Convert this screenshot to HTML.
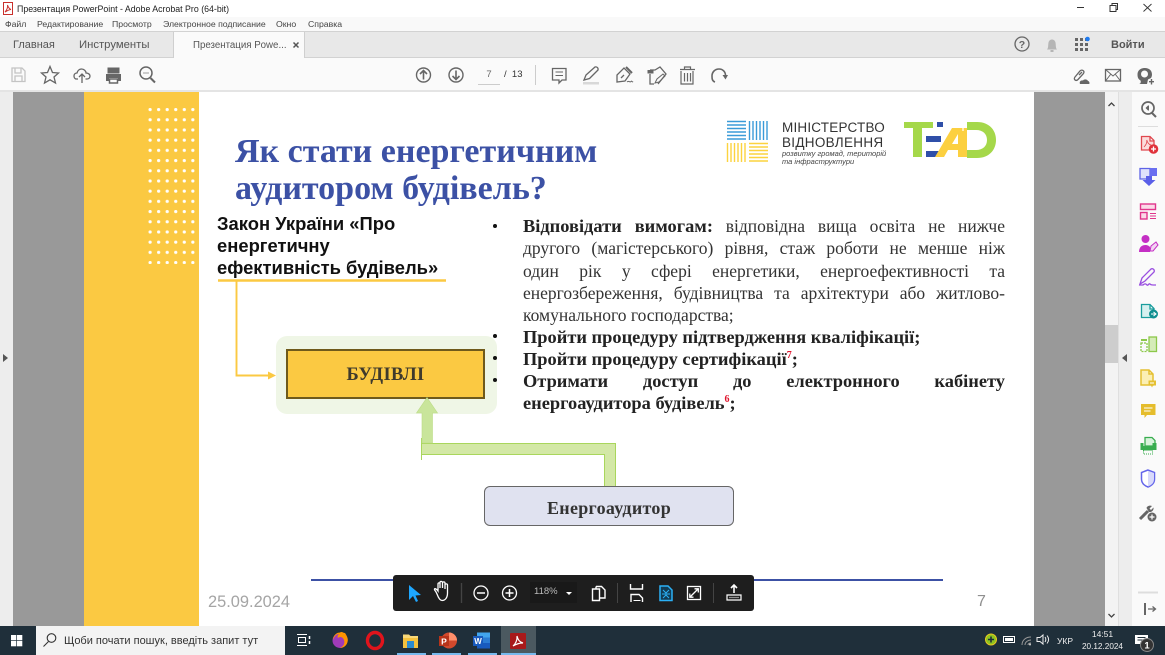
<!DOCTYPE html>
<html><head><meta charset="utf-8">
<style>
*{margin:0;padding:0;box-sizing:border-box}
html,body{width:1165px;height:655px;overflow:hidden;background:#fff}
body{position:relative;font-family:"Liberation Sans","DejaVu Sans",sans-serif}
.a{position:absolute;white-space:nowrap}
.m{top:19px;font-size:8.7px;line-height:11px;color:#444}
.j{position:absolute;left:523px;width:482px;font-family:"Liberation Serif",serif;font-size:17.5px;line-height:22px;height:22px;color:#333;text-align:justify;text-align-last:justify;white-space:nowrap}
.l{text-align-last:left}
.b{font-weight:bold;color:#222;font-size:18.4px}
.d{position:absolute;left:493px;width:4px;height:4px;border-radius:50%;background:#111}
sup{font-size:10px;color:#e0142c;line-height:0;font-weight:bold}
svg{position:absolute;overflow:visible}
</style></head><body>

<!-- title bar -->
<div class="a" style="left:0;top:0;width:1165px;height:17px;background:#fff"></div>
<svg style="left:1px;top:1px" width="14" height="15"><rect x="2.5" y="1.5" width="9" height="12" fill="#fff" stroke="#c9302c"/><path d="M4 11C6 9 7 6 6.500 4 7.500 7 8.500 8 10 8.500 8 8.500 6 10 4 11Z" fill="none" stroke="#c9302c"/></svg>
<div class="a" style="left:17px;top:3px;font-size:8.8px;line-height:12px;color:#222">Презентация PowerPoint - Adobe Acrobat Pro (64-bit)</div>
<svg style="left:1070px;top:0" width="95" height="17" fill="none" stroke="#333"><path d="M7 7.500H14"/><rect x="40" y="5.500" width="6" height="6"/><path d="M42 5.500V3.500H47.500V9.500H46"/><path d="M73.500 4L81.500 11.500M81.500 4L73.500 11.500" stroke-width=".9"/></svg>

<!-- menu -->
<div class="a" style="left:0;top:17px;width:1165px;height:15px;background:#f9f9f9"></div>
<div class="a m" style="left:5px">Файл</div>
<div class="a m" style="left:37px">Редактирование</div>
<div class="a m" style="left:112px">Просмотр</div>
<div class="a m" style="left:163px">Электронное подписание</div>
<div class="a m" style="left:276px">Окно</div>
<div class="a m" style="left:308px">Справка</div>

<!-- tab bar -->
<div class="a" style="left:0;top:31px;width:1165px;height:27px;background:#e8e8e8;border-top:1px solid #d2d2d2;border-bottom:1px solid #d2d2d2"></div>
<div class="a" style="left:173px;top:32px;width:132px;height:27px;background:#fafafa;border-left:1px solid #cfcfcf;border-right:1px solid #cfcfcf"></div>
<div class="a" style="left:13px;top:38px;font-size:11px;line-height:14px;color:#555">Главная</div>
<div class="a" style="left:79px;top:38px;font-size:11.3px;line-height:14px;color:#555">Инструменты</div>
<div class="a" style="left:193px;top:39px;font-size:9.7px;line-height:13px;color:#555">Презентация Powe...</div>
<svg style="left:292px;top:41px" width="10" height="10"><path d="M1.500 1.500L6.500 6.500M6.500 1.500L1.500 6.500" stroke="#555" stroke-width="1.500"/></svg>
<!-- right tab icons -->
<svg style="left:1012px;top:34px" width="90" height="22">
<circle cx="10" cy="10" r="7" fill="none" stroke="#666" stroke-width="1.300"/>
<text x="10" y="14" font-size="10.500" font-weight="bold" fill="#666" text-anchor="middle" font-family="Liberation Sans">?</text>
<path d="M35 15.500C36.500 14 36 11 36.500 8.500 37 6.500 38.500 5.500 40 5.500 41.500 5.500 43 6.500 43.500 8.500 44 11 43.500 14 45 15.500Z" fill="#b5b5b5"/><rect x="38.500" y="16" width="3" height="2" fill="#b5b5b5"/>
<g fill="#666"><rect x="63" y="4" width="3" height="3"/><rect x="68" y="4" width="3" height="3"/><rect x="73" y="4" width="3" height="3"/><rect x="63" y="9" width="3" height="3"/><rect x="68" y="9" width="3" height="3"/><rect x="73" y="9" width="3" height="3"/><rect x="63" y="14" width="3" height="3"/><rect x="68" y="14" width="3" height="3"/><rect x="73" y="14" width="3" height="3"/></g>
<circle cx="75.500" cy="5" r="2.300" fill="#1e7bf0"/>
</svg>
<div class="a" style="left:1111px;top:38px;font-size:11px;line-height:14px;font-weight:bold;color:#555">Войти</div>

<!-- toolbar -->
<div class="a" style="left:0;top:58px;width:1165px;height:34px;background:#fafafa;border-bottom:2px solid #e4e4e4"></div>
<svg style="left:0;top:58px" width="1165" height="34" fill="none" stroke="#666" stroke-width="1.300">
<path d="M12 10H22L25 13V23.500H12Z M15 10V15H21V10 M15 23.500V18H22V23.500" stroke="#c4c4c4"/>
<path d="M50 8.500L52.500 14.500 58.500 15 54 19 55.500 25 50 21.800 44.500 25 46 19 41.500 15 47.500 14.500Z"/>
<path d="M78 21H76.500C74.500 21 74 19 74 18 74 16 75.500 15 77 15 77.500 12.500 79.500 11 81.500 11 84 11 86 13 86 15 88.500 15 90 16.500 90 18 90 20 88.500 21 87 21H85.500"/><path d="M82 25V16M79 19L82 16 85 19"/>
<path d="M106 16H121V23H118V20H109V23H106Z" fill="#666" stroke="none"/><rect x="108" y="10" width="11" height="5" fill="#666" stroke="#666" stroke-width="1"/><rect x="109.500" y="21" width="8" height="4" fill="none" stroke="#666" stroke-width="1.500"/>
<circle cx="146" cy="15" r="6" stroke-width="1.500"/><path d="M150.500 20L155 24.500" stroke-width="2"/><path d="M143.500 15H148.500" stroke-dasharray="1 1"/>
<circle cx="423.500" cy="17" r="7" stroke-width="1.400"/><path d="M423.500 21.500V13M420 16L423.500 12.500 427 16" stroke-width="1.600"/>
<circle cx="456" cy="17" r="7" stroke-width="1.400"/><path d="M456 12.500V21M452.500 18L456 21.500 459.500 18" stroke-width="1.600"/>
<path d="M535.500 7V27" stroke="#ccc" stroke-width="1"/>
<path d="M552.500 10.500H566V22H562L559 25V22H552.500Z"/><path d="M555.500 14H563M555.500 17.500H563" stroke-width="1"/>
<path d="M584 22L586 17 595 9C597 8.500 598.500 10 598 12L589.500 20.500Z"/><rect x="583" y="24" width="16" height="2.500" fill="#d8d8d8" stroke="none"/>
<path d="M617 24L617 17 624 10 630 16 625 23ZM621 20L624 17"/><path d="M626 9L632 15" stroke-width="2"/><path d="M627 24C629 22 630 25 631 23.500S632 25 633 23.500" stroke-width="1"/>
<path d="M650 12H655L660 9L666 16L658 26M650 16V26H654"/><rect x="647.500" y="12" width="6" height="3.500" fill="#666" stroke="none"/><path d="M655 25L657 21 663 16 665 18 659 24Z" stroke-width="1"/>
<path d="M681 13V26H693V13M680 11.500H695M684.500 11V9H690.500V11M684.500 15V23.500M687.500 15V23.500M690.500 15V23.500" stroke-width="1.200"/>
<path d="M715 24C712 23 712 20.500 712 18 712 14 715 11 719 11 723 11 725.500 14 725.500 17.500" stroke-width="1.600"/><path d="M722.500 17L725.500 21.500 728 17Z" fill="#666" stroke="none"/>
<path d="M1075 19L1080 13C1082 11 1085 13 1083.500 15.500L1078 21.500C1076 23.500 1073 21.500 1075 19ZM1079 17L1082 14"/><path d="M1080 26C1079 23.500 1081 22 1083 22.500 1084 21 1087 21 1088 23 1089.500 23 1090 26 1089 26Z" fill="#666" stroke="none"/>
<rect x="1105.500" y="11.500" width="15" height="11.500"/><path d="M1105.500 11.500L1113 18 1120.500 11.500M1105.500 23L1110.500 16.500M1120.500 23L1115.500 16.500" stroke-width="1"/>
<path d="M1139 26C1141 26 1141 23 1140.500 22.500 1138 21 1137.500 19 1137.500 16.500 1137.500 12.500 1140.500 10 1145 10 1149 10 1152 12.500 1152 16.500 1152 18 1151.500 19 1151 20L1148 21.500 1147 26Z" fill="#666" stroke="none"/><circle cx="1144.500" cy="16" r="3.500" fill="#fafafa" stroke="none"/>
<path d="M1151.500 21V26.500M1149 23.700H1154" stroke-width="1.400"/>
</svg>
<div class="a" style="left:478px;top:69px;width:22px;text-align:center;font-size:9.500px;line-height:12px;color:#666;border-bottom:1px solid #ccc;height:16px">7</div>
<div class="a" style="left:504px;top:69px;font-size:9.500px;line-height:12px;color:#333">/ &nbsp;13</div>

<!-- document area -->
<div class="a" style="left:0;top:92px;width:13px;height:534px;background:#ededed"></div>
<svg style="left:3px;top:354px" width="6" height="8"><path d="M0 0L5 4 0 8Z" fill="#555"/></svg>
<div class="a" style="left:13px;top:92px;width:71px;height:534px;background:#999"></div>
<div class="a" style="left:1034px;top:92px;width:71px;height:534px;background:#999"></div>

<!-- scrollbars / panels -->
<div class="a" style="left:1105px;top:92px;width:13px;height:534px;background:#f3f3f3"></div>
<div class="a" style="left:1105px;top:325px;width:13px;height:38px;background:#cdcdcd"></div>
<svg style="left:1107px;top:101px" width="9" height="520" fill="none" stroke="#444" stroke-width="1.300"><path d="M1.500 5L4.500 2 7.500 5M1.500 513L4.500 516 7.500 513"/></svg>
<div class="a" style="left:1118px;top:92px;width:14px;height:534px;background:#ededed;border-left:1px solid #dfdfdf"></div>
<svg style="left:1122px;top:354px" width="6" height="8"><path d="M5 0L0 4 5 8Z" fill="#555"/></svg>
<div class="a" style="left:1132px;top:92px;width:33px;height:534px;background:#fafafa"></div>

<!-- right panel icons -->
<svg style="left:1132px;top:92px" width="33" height="534" fill="none">
<circle cx="16" cy="16" r="6" stroke="#666" stroke-width="1.700"/><path d="M20 21L24 25" stroke="#666" stroke-width="2"/><path d="M13.500 16L16 13.500V18.500Z" fill="#666"/><path d="M16.500 13.500V18.500" stroke="#666"/>
<path d="M6 34.500H26" stroke="#ddd"/>
<!-- create pdf red -->
<path d="M9.500 44.500H18L22 48.500V58H9.500ZM18 44.500V49H22" fill="#fbdcdc" stroke="#e0484f" stroke-width="1.300"/><path d="M12 55C14 53 15 50 14.800 48 15.500 51 17 52.500 19 53" stroke="#e0484f" stroke-width=".8"/><circle cx="21.500" cy="57" r="4.800" fill="#e0313a"/><path d="M19 57H24M21.500 54.500V59.500" stroke="#fff" stroke-width="1.300"/>
<!-- combine blue -->
<path d="M8 76.500H18V87H8Z" fill="#dfe1fb" stroke="#5e63e6" stroke-width="1.300"/><path d="M18 76H25V84H18Z" fill="#6a6ff0"/><path d="M14 84H20V88H23.500L17 94 10.500 88H14Z" fill="#5a5fe8"/>
<!-- organise pink -->
<rect x="8.500" y="112" width="15" height="5.500" fill="#fbd9e8" stroke="#e0368c" stroke-width="1.400"/><rect x="8.500" y="120.500" width="6.500" height="6.500" fill="#fbd9e8" stroke="#e0368c" stroke-width="1.400"/><path d="M18 121.500H24M18 124H24M18 126.500H24" stroke="#e0368c"/>
<!-- person sign magenta -->
<circle cx="13.500" cy="147" r="4" fill="#c42fc4"/><path d="M7 160C7 155 10 153 13.500 153 15.500 153 17 154 18 155V160Z" fill="#c42fc4"/><path d="M18 159L19 154 24 150 26 153 21 159Z" fill="#f3d4f3" stroke="#c42fc4"/>
<!-- sign purple -->
<path d="M8 192L10 186 19 177C21 176 23 178 22 180L13 189ZM7 193H11C13 191 14 192 15 193S17 191 18 192 20 193 24 193" stroke="#9a4fe0" stroke-width="1.300"/>
<!-- send teal -->
<path d="M9.500 212.500H18L22 216.500V225.500H9.500ZM18 212.500V217H22" fill="#d6f0ef" stroke="#1a9d9d" stroke-width="1.300"/><circle cx="21.500" cy="222" r="4.500" fill="#0f8f90"/><path d="M19 222H23.500M21.500 220L24 222 21.500 224" stroke="#fff" stroke-width="1"/>
<!-- compress green -->
<rect x="17" y="245" width="7.500" height="14.500" fill="#d5ecb8" stroke="#8cc84a" stroke-width="1.300"/><rect x="9" y="251" width="6" height="8.500" stroke="#8cc84a" stroke-width="1.300" stroke-dasharray="2 1"/><path d="M9 248H15" stroke="#8cc84a" stroke-width="2"/>
<!-- yellow doc -->
<path d="M9 278H17L21 282V293H9ZM17 278V282H21" fill="#fbefb4" stroke="#e5c032" stroke-width="1.500"/><path d="M16.500 288.500H24V293.500H21L20 295.500 19 293.500H16.500Z" fill="#e5c032"/><path d="M18 291H22" stroke="#fff"/>
<!-- comment yellow -->
<path d="M9 312H23.500V323H15L12.500 326V323H9Z" fill="#e5bd2c"/><path d="M12 316H20.500M12 319H18.500" stroke="#fff"/>
<!-- print green -->
<path d="M13 345.500H20L23 348.500V354H13Z" fill="#d9f3dc" stroke="#38ad4f" stroke-width="1.300"/><path d="M8.500 351H11.500V354H20.500V351H24.500V358H8.500Z" fill="#38ad4f"/><rect x="11.500" y="358.500" width="9" height="3.500" stroke="#38ad4f" stroke-dasharray="1 1"/>
<!-- shield -->
<path d="M16 378L9.500 380.500V387C9.500 391 12 393.500 16 395 20 393.500 22.500 391 22.500 387V380.500Z" fill="#fff" stroke="#6465ea" stroke-width="1.500"/><path d="M16 379V394.500C19.500 393 22 391 22 387V381Z" fill="#d8d9fb"/>
<!-- tools -->
<path d="M8 427L16 419" stroke="#666" stroke-width="3"/><path d="M14.500 416C15 414 18 413 20 414L17.500 416.500 19 418 21.500 415.500C22 418 20 420.500 17 420Z" fill="#666"/><circle cx="20" cy="425" r="4.500" fill="#666"/><path d="M17.500 425H22.500M20 422.500V427.500" stroke="#fff" stroke-width="1.200"/>
<path d="M6 500.500H26" stroke="#ddd" stroke-width="2"/>
<!-- collapse -->
<path d="M13 511V523" stroke="#666" stroke-width="2"/><path d="M16 517H23M20.500 514.500L23.500 517 20.500 519.500" stroke="#666" stroke-width="1.300"/>
</svg>

<!-- SLIDE -->
<div class="a" style="left:84px;top:92px;width:950px;height:534px;background:#fff"></div>
<div class="a" style="left:84px;top:92px;width:115px;height:534px;background:#fbc942"></div>
<svg style="left:0;top:0" width="200" height="270" fill="#fff">
<defs><pattern id="dots" x="148.500" y="108" width="8.550" height="10.200" patternUnits="userSpaceOnUse"><circle cx="1.600" cy="1.600" r="1.600"/></pattern></defs>
<rect x="148" y="108" width="51.500" height="156" fill="url(#dots)"/>
</svg>

<!-- title -->
<div class="a" style="left:235px;top:133px;font-family:'Liberation Serif',serif;font-weight:bold;font-size:34px;line-height:38px;color:#3c51a5">Як стати енергетичним</div>
<div class="a" style="left:235px;top:170px;font-family:'Liberation Serif',serif;font-weight:bold;font-size:34px;line-height:38px;color:#3c51a5">аудитором будівель?</div>

<!-- logos -->
<svg style="left:726px;top:120px" width="44" height="44">
<g stroke="#3a9bd8" stroke-width="1.400"><path d="M1 1.500H20M1 5H20M1 8.500H20M1 12H20M1 15.500H20M1 19H20"/><path d="M23.500 1V20M27 1V20M30.500 1V20M34 1V20M37.500 1V20M41 1V20"/></g>
<g stroke="#fcd33f" stroke-width="1.400"><path d="M1.500 23V42M5 23V42M8.500 23V42M12 23V42M15.500 23V42M19 23V42"/><path d="M23 23.500H42M23 27H42M23 30.500H42M23 34H42M23 37.500H42M23 41H42"/></g>
</svg>
<div class="a" style="left:782px;top:121px;font-size:13.5px;line-height:14px;color:#333;letter-spacing:.2px">МІНІСТЕРСТВО</div>
<div class="a" style="left:782px;top:136px;font-size:13.5px;line-height:14px;color:#333;letter-spacing:.3px">ВІДНОВЛЕННЯ</div>
<div class="a" style="left:782px;top:150px;font-size:7.5px;line-height:8px;color:#444;font-style:italic">розвитку громад, територій</div>
<div class="a" style="left:782px;top:158px;font-size:7.5px;line-height:8px;color:#444;font-style:italic">та інфраструктури</div>
<svg style="left:903px;top:120px" width="95" height="40">
<path d="M1 2H30V8H19V37H10V8H1Z" fill="#a5d84a"/>
<rect x="34" y="2" width="6" height="5" fill="#2f4fa8"/>
<rect x="23" y="16" width="15" height="6" fill="#2f4fa8"/>
<rect x="23" y="31" width="15" height="6" fill="#2f4fa8"/>
<path d="M32 37L49 8H64V37H55V30H45L41 37Z" fill="#fcd040"/>
<path d="M49 24H55V14Z" fill="#fff"/>
<path d="M64 2H74C86 2 93 10 93 20 93 30 86 38 74 38H64V30H73C80 30 84 26 84 20 84 14 80 10 73 10H64Z" fill="#a5d84a"/>
<path d="M60 3V11M56 7H64" stroke="#fff" stroke-width="1.200"/>
</svg>

<!-- law -->
<div class="a" style="left:217px;top:213px;font-weight:bold;font-size:18.4px;line-height:22px;color:#111">Закон України «Про</div>
<div class="a" style="left:217px;top:235px;font-weight:bold;font-size:18.4px;line-height:22px;color:#111">енергетичну</div>
<div class="a" style="left:217px;top:257px;font-weight:bold;font-size:18.4px;line-height:22px;color:#111">ефективність будівель»</div>

<!-- diagram -->
<div class="a" style="left:276px;top:336px;width:221px;height:78px;border-radius:11px;background:#eff6e6"></div>
<svg style="left:0;top:0" width="1165" height="655">
<path d="M218 280.500H446" stroke="#fbc942" stroke-width="2.500"/>
<path d="M236.500 281V375.500H270" fill="none" stroke="#fbc942" stroke-width="1.900"/>
<path d="M268 371.500L276 375.500 268 379.500Z" fill="#fbc942"/>
<path d="M421.500 443H615.500V487H604.500V454.500H421.500Z" fill="#d3e8a6"/>
<path d="M421.500 438V460M421.500 454.500H604.500V487M615.500 487V443.500H421.500" fill="none" stroke="#a9d65c" stroke-width="1"/>
</svg>
<div class="a" style="left:286px;top:349px;width:199px;height:50px;background:#fbc942;border:2px solid #6f5a1b;text-align:center;font-family:'Liberation Serif',serif;font-weight:bold;font-size:18.5px;line-height:48px;color:#3f3a2c;letter-spacing:.3px">БУДІВЛІ</div>
<svg style="left:0;top:0" width="1165" height="655">
<path d="M427 397.500L437.500 413H432.500V443H422V413H416.500Z" fill="#c9e59b" stroke="#bcdc86" stroke-width=".6"/>
</svg>
<div class="a" style="left:484px;top:486px;width:250px;height:40px;background:#e0e2f0;border:1.500px solid #666;border-radius:6px;text-align:center;font-family:'Liberation Serif',serif;font-weight:bold;font-size:18px;line-height:42px;color:#333;letter-spacing:.3px">Енергоаудитор</div>

<!-- bullets -->
<div class="d" style="top:224px"></div>
<div class="d" style="top:334px"></div>
<div class="d" style="top:356px"></div>
<div class="d" style="top:378px"></div>
<div class="j" style="top:215px"><b class="b">Відповідати вимогам:</b> відповідна вища освіта не нижче</div>
<div class="j" style="top:237px">другого (магістерського) рівня, стаж роботи не менше ніж</div>
<div class="j" style="top:260px">один рік у сфері енергетики, енергоефективності та</div>
<div class="j" style="top:282px">енергозбереження, будівництва та архітектури або житлово-</div>
<div class="j l" style="top:304px">комунального господарства;</div>
<div class="j l b" style="top:326px">Пройти процедуру підтвердження кваліфікації;</div>
<div class="j l b" style="top:348px">Пройти процедуру сертифікації<sup>7</sup>;</div>
<div class="j b" style="top:370px">Отримати доступ до електронного кабінету</div>
<div class="j l b" style="top:392px">енергоаудитора будівель<sup>6</sup>;</div>

<!-- footer of slide -->
<div class="a" style="left:311px;top:579px;width:632px;height:2px;background:#3c51a5"></div>
<div class="a" style="left:208px;top:593px;font-size:16.4px;line-height:18px;color:#a5a5a5">25.09.2024</div>
<div class="a" style="left:977px;top:593px;font-size:16px;line-height:18px;color:#8f8f8f">7</div>

<!-- float toolbar -->
<div class="a" style="left:393px;top:575px;width:361px;height:36px;background:#1e1e1e;border-radius:3px"></div>
<div class="a" style="left:530px;top:582px;width:47px;height:21px;background:#191919"></div>
<div class="a" style="left:534px;top:586px;font-size:9.5px;line-height:12px;color:#bbb">118%</div>
<svg style="left:390px;top:570px" width="370" height="45" fill="none" stroke="#fff" stroke-width="1.300">
<path d="M19 15L19 30 23 26 26 32 28 31 25.500 25.500 31 25Z" fill="#1ea7ff" stroke="none"/>
<path d="M47 24C46 21 44 20 44.500 19 45 18 47 19.500 48 21V14C48 12.500 50 12.500 50 14V18 12.500C50 11 52 11 52.500 12.500V18 13C52.500 11.500 55 11.500 55 13V19 15C55 13.500 57.500 13.500 57.500 15V23C57.500 28 55 30.500 52 30.500 50 30.500 48.500 28 47 24Z"/>
<path d="M71.500 13V33" stroke="#444"/>
<circle cx="91" cy="23" r="7"/><path d="M87 23H95" stroke-width="1.500"/>
<circle cx="119.500" cy="23" r="7"/><path d="M115.500 23H123.500M119.500 19V27" stroke-width="1.500"/>
<path d="M176 22H182L179 25Z" fill="#fff" stroke="none"/>
<!-- pages -->
<path d="M206 16.500H211.500L215 20V28H210" stroke-width="1.400"/><path d="M206 16.500V19" stroke-width="1.400"/><path d="M202.500 19H209.500V30.500H202.500Z" stroke-width="1.400"/>
<path d="M227.500 13V33" stroke="#444" stroke-width="1"/>
<!-- fit width -->
<path d="M240.500 14V19H252.500V14M241 32V24.500H249L252.500 28V32" stroke-width="1.400"/><path d="M243.500 30.500H250.500" stroke-width="1"/>
<!-- blue -->
<path d="M270 16H278L282 20V30.500H270Z" stroke="#2bb0f5" fill="#123c55" stroke-width="1.500"/><path d="M273 20L276 23 279 20M273 28L276 25 279 28M272 24H280" stroke="#2bb0f5" stroke-width="1"/>
<!-- fullscreen -->
<rect x="297.500" y="16.500" width="13" height="13" stroke-width="1.300"/><path d="M300 27L308 19M304.500 18.800H308.300V22.500M299.800 23.500V27.200H303.500" stroke-width="1.300"/>
<path d="M323.500 13V33" stroke="#444" stroke-width="1"/>
<path d="M344 23V15.500M341 18L344 15 347 18" stroke-width="1.600"/><path d="M337 25H351V30H337Z" stroke-width="1.200"/><path d="M339.500 27.500H349" stroke-dasharray="1 1" stroke-width="1.200"/>
</svg>

<!-- taskbar -->
<div class="a" style="left:0;top:626px;width:1165px;height:29px;background:#1f2f3a"></div>
<svg style="left:11px;top:635px" width="12" height="12" fill="#fff"><rect width="5.300" height="5.300" x="0" y="0"/><rect width="5.300" height="5.300" x="6" y="0"/><rect width="5.300" height="5.300" x="0" y="6"/><rect width="5.300" height="5.300" x="6" y="6"/></svg>
<div class="a" style="left:36px;top:626px;width:249px;height:29px;background:#f3f3f3"></div>
<svg style="left:42px;top:632px" width="16" height="17" fill="none" stroke="#333" stroke-width="1.100"><circle cx="9.500" cy="6" r="4.300"/><path d="M6.500 9.500L1.500 14.500"/></svg>
<div class="a" style="left:64px;top:634px;font-size:11px;line-height:14px;color:#333">Щоби почати пошук, введіть запит тут</div>
<svg style="left:296px;top:632px" width="16" height="18" fill="none" stroke="#fff"><path d="M1 2.500H11M1 13.500H11M2.500 5.500H9.500V10.500H2.500Z"/><path d="M13.500 4V7M13.500 9V12" stroke-width="1.500"/></svg>
<!-- apps -->
<svg style="left:330px;top:628px" width="210" height="27">
<circle cx="10" cy="12.500" r="7.500" fill="#a13bb8"/><path d="M3 12C3 8 6 4.500 10 4.500 12 3 13 5 15 5 17 8 18.500 11 17.500 14 16.500 18 13 20 10 20 14 18 15 15 14 12 13 9 10 8 8 10 7 8 8 7 9 6 6 6 4 9 3 12Z" fill="#ff9400"/>
<ellipse cx="45" cy="12.500" rx="7.500" ry="8" fill="none" stroke="#e0141c" stroke-width="3.400"/>
<path d="M73 6.500H79L80.500 8H88V20H73Z" fill="#f8d878"/><path d="M73 10H88V20H73Z" fill="#f3c13d"/><rect x="77" y="13" width="7" height="7" fill="#2a8bd0"/>
<circle cx="119" cy="12.500" r="8" fill="#d1492c"/><path d="M119 4.500A8 8 0 0 1 127 12.500H119Z" fill="#ff8f6b"/><rect x="109" y="8" width="10" height="10" fill="#b7341a"/>
<text x="114" y="16.500" font-size="8.500" fill="#fff" font-weight="bold" text-anchor="middle" font-family="Liberation Sans">P</text>
<rect x="147" y="4.500" width="13" height="16" fill="#2b7cd3"/><rect x="147" y="4.500" width="13" height="5" fill="#41a5ee"/><rect x="147" y="15" width="13" height="5.500" fill="#185abd"/><rect x="143" y="8" width="10" height="10" fill="#185abd"/>
<text x="148" y="16" font-size="8" fill="#fff" font-weight="bold" text-anchor="middle" font-family="Liberation Sans">W</text>
</svg>
<div class="a" style="left:501px;top:626px;width:35px;height:29px;background:#4b5960"></div>
<svg style="left:510px;top:633px" width="16" height="16"><rect width="16" height="16" rx="1" fill="#a8191a"/><path d="M3 13C5.500 11 7.500 7 7 3 8 7 9.500 9 13 10 10 9.800 6.500 11 3 13Z" fill="none" stroke="#fff" stroke-width="1.200"/></svg>
<!-- taskbar running underlines -->
<div class="a" style="left:397px;top:653px;width:29px;height:2px;background:#76b9ed"></div>
<div class="a" style="left:432px;top:653px;width:29px;height:2px;background:#76b9ed"></div>
<div class="a" style="left:468px;top:653px;width:29px;height:2px;background:#76b9ed"></div>
<div class="a" style="left:501px;top:653px;width:35px;height:2px;background:#76b9ed"></div>
<!-- tray -->
<svg style="left:980px;top:630px" width="185" height="25" fill="none">
<circle cx="11" cy="9.500" r="5.500" fill="#8fc31f" stroke="#e8c820" stroke-width="1"/><path d="M8 9.500H14M11 6.500V12.500" stroke="#1f2f3a" stroke-width="1.600"/>
<rect x="23.500" y="6.500" width="11" height="6" stroke="#fff"/><rect x="25" y="8" width="8" height="3" fill="#fff"/>
<path d="M42 15C42 10 46 7 51 7M45 15C45 12 48 10 51 10M48 15C48 14 49 13 51 13" stroke="#999"/><circle cx="50" cy="14.500" r="1" fill="#ccc"/>
<path d="M57 7.500H60L63 5V14L60 11.500H57Z" stroke="#eee"/><path d="M65 7C66 8.500 66 10.500 65 12M67 5.500C69 8 69 11 67 13.500" stroke="#eee"/>
<path d="M155 5H168V14H163L161 16V14H155Z" fill="#fff"/><path d="M157.500 7.500H165.500M157.500 10H165.500" stroke="#1f2f3a"/>
<circle cx="167" cy="15" r="6.500" fill="#333" stroke="#888"/>
<text x="167" y="18.500" font-size="9.500" font-weight="bold" fill="#fff" text-anchor="middle" font-family="Liberation Sans">1</text>
</svg>
<div class="a" style="left:1057px;top:635px;font-size:8.5px;line-height:12px;color:#eee">УКР</div>
<div class="a" style="left:1078px;top:628px;width:49px;text-align:center;font-size:8.5px;line-height:12px;color:#eee">14:51</div>
<div class="a" style="left:1078px;top:641px;width:49px;text-align:center;font-size:8.2px;line-height:12px;color:#eee">20.12.2024</div>
</body></html>
